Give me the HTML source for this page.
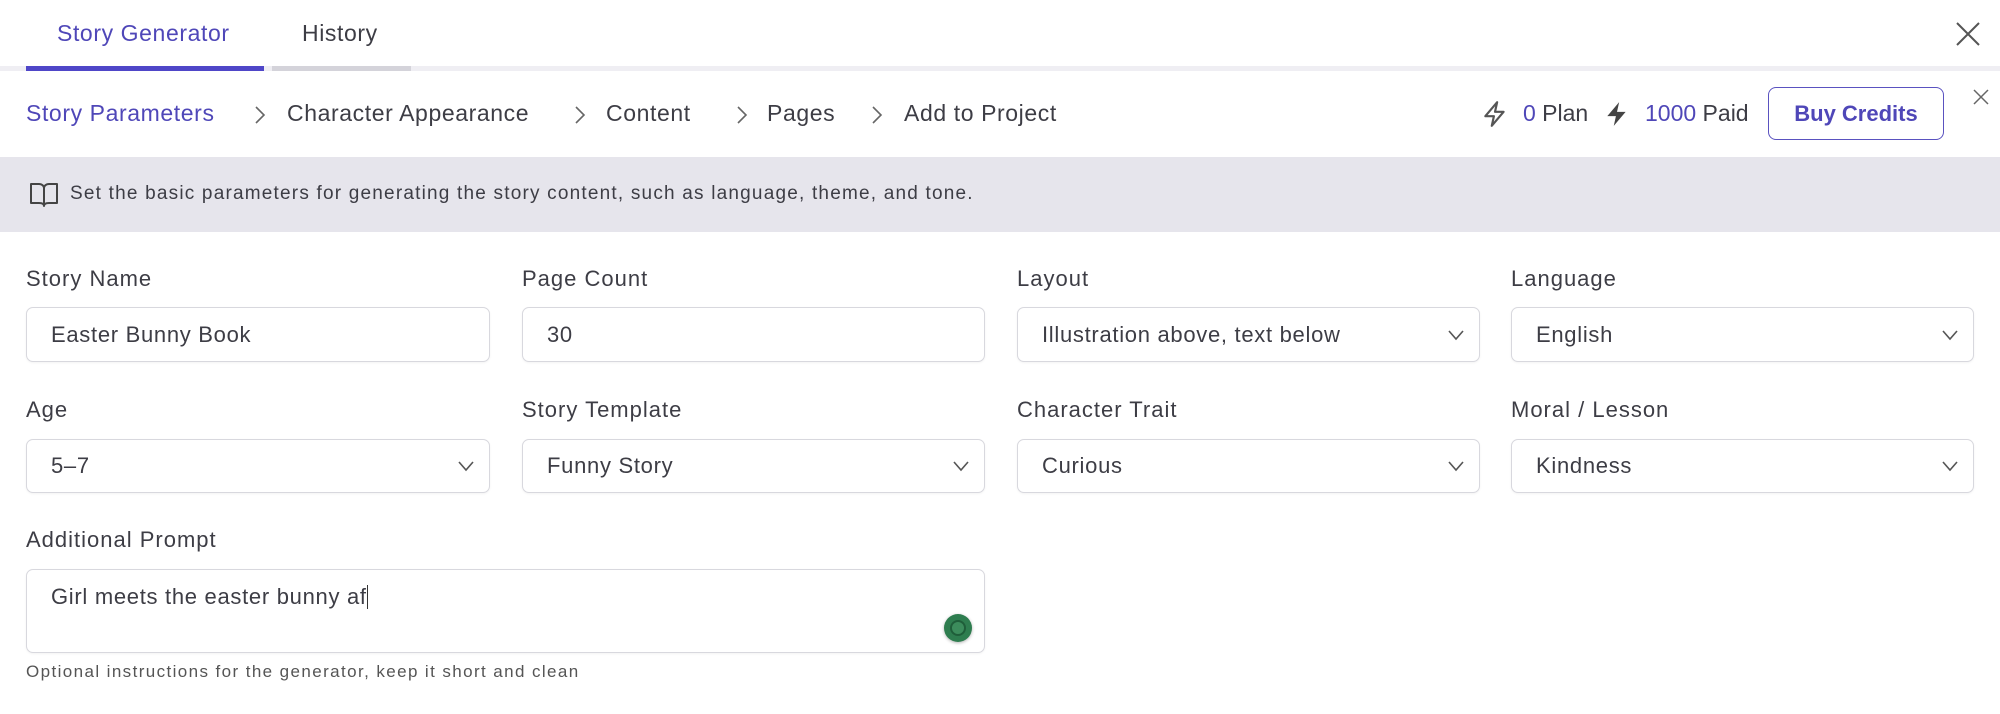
<!DOCTYPE html>
<html><head><meta charset="utf-8"><style>
*{box-sizing:border-box;margin:0;padding:0}
body{width:2000px;height:714px;background:#fff;font-family:"Liberation Sans",sans-serif;color:#3d3d45;position:relative;overflow:hidden}
.a{position:absolute;white-space:nowrap}
.tab{font-size:23px;top:20px;letter-spacing:.6px}
.bc{font-size:23px;top:100px;letter-spacing:.6px}
.chev{position:absolute;top:104px;width:20px;height:22px}
.lbl{font-size:22px;letter-spacing:1px}
.inp{position:absolute;border:1.5px solid #d8d8de;border-radius:7px;background:#fff;font-size:22px;letter-spacing:.7px;padding-left:24px;display:flex;align-items:center;box-shadow:0 1px 2px rgba(0,0,0,.05)}
.dd{position:absolute;right:14px;top:50%;margin-top:-8px}
</style></head><body>
<div class="a tab" style="left:57px;color:#4f47b8">Story Generator</div>
<div class="a tab" style="left:302px">History</div>
<div class="a" style="left:0;top:66px;width:2000px;height:5px;background:#efeef3"></div>
<div class="a" style="left:26px;top:66px;width:238px;height:5px;background:#4f46c8"></div>
<div class="a" style="left:272px;top:66px;width:139px;height:5px;background:#d4d3da"></div>
<svg class="a" style="left:1956px;top:22px" width="24" height="24"><path d="M1 1L23 23M23 1L1 23" stroke="#555" stroke-width="2"/></svg>

<div class="a bc" style="left:26px;color:#4f47b8">Story Parameters</div>
<svg class="chev" style="left:250px" viewBox="0 0 20 22"><path d="M6 3l8 8-8 8" fill="none" stroke="#666" stroke-width="1.6"/></svg>
<div class="a bc" style="left:287px">Character Appearance</div>
<svg class="chev" style="left:570px" viewBox="0 0 20 22"><path d="M6 3l8 8-8 8" fill="none" stroke="#666" stroke-width="1.6"/></svg>
<div class="a bc" style="left:606px">Content</div>
<svg class="chev" style="left:732px" viewBox="0 0 20 22"><path d="M6 3l8 8-8 8" fill="none" stroke="#666" stroke-width="1.6"/></svg>
<div class="a bc" style="left:767px">Pages</div>
<svg class="chev" style="left:867px" viewBox="0 0 20 22"><path d="M6 3l8 8-8 8" fill="none" stroke="#666" stroke-width="1.6"/></svg>
<div class="a bc" style="left:904px">Add to Project</div>

<svg class="a" style="left:1482px;top:100px" width="26" height="28" viewBox="0 0 24 26"><path d="M14 2L3 15h8l-2 9 11-13h-8z" fill="none" stroke="#555" stroke-width="2" stroke-linejoin="round"/></svg>
<div class="a bc" style="left:1523px;letter-spacing:0"><span style="color:#4f47b8">0</span> Plan</div>
<svg class="a" style="left:1604px;top:100px" width="26" height="28" viewBox="0 0 24 26"><path d="M14 2L3 15h8l-2 9 11-13h-8z" fill="#444"/></svg>
<div class="a bc" style="left:1645px;letter-spacing:0"><span style="color:#4f47b8">1000</span> Paid</div>
<div class="a" style="left:1768px;top:87px;width:176px;height:53px;border:1.5px solid #5a52c0;border-radius:8px;color:#4f47b8;font-size:22px;font-weight:bold;display:flex;align-items:center;justify-content:center">Buy Credits</div>
<svg class="a" style="left:1973px;top:89px" width="16" height="16"><path d="M1 1L15 15M15 1L1 15" stroke="#666" stroke-width="1.5"/></svg>

<div class="a" style="left:0;top:157px;width:2000px;height:75px;background:#e6e5ec"></div>
<svg class="a" style="left:29px;top:181px" width="30" height="28" viewBox="0 0 30 28"><path d="M2 3h8c3 0 5 2 5 4v18c0-2-2-3-5-3H2zM28 3h-8c-3 0-5 2-5 4v18c0-2 2-3 5-3h8z" fill="none" stroke="#444" stroke-width="2" stroke-linejoin="round"/></svg>
<div class="a" style="left:70px;top:183px;font-size:19px;letter-spacing:1.2px">Set the basic parameters for generating the story content, such as language, theme, and tone.</div>

<div class="a lbl" style="left:26px;top:266px">Story Name</div>
<div class="a lbl" style="left:522px;top:266px">Page Count</div>
<div class="a lbl" style="left:1017px;top:266px">Layout</div>
<div class="a lbl" style="left:1511px;top:266px">Language</div>
<div class="inp" style="left:26px;top:307px;width:464px;height:55px">Easter Bunny Book</div>
<div class="inp" style="left:522px;top:307px;width:463px;height:55px">30</div>
<div class="inp" style="left:1017px;top:307px;width:463px;height:55px">Illustration above, text below<svg class="dd" width="18" height="16"><path d="M2 4l7 8 7-8" fill="none" stroke="#555" stroke-width="1.6"/></svg></div>
<div class="inp" style="left:1511px;top:307px;width:463px;height:55px">English<svg class="dd" width="18" height="16"><path d="M2 4l7 8 7-8" fill="none" stroke="#555" stroke-width="1.6"/></svg></div>

<div class="a lbl" style="left:26px;top:397px">Age</div>
<div class="a lbl" style="left:522px;top:397px">Story Template</div>
<div class="a lbl" style="left:1017px;top:397px">Character Trait</div>
<div class="a lbl" style="left:1511px;top:397px">Moral / Lesson</div>
<div class="inp" style="left:26px;top:439px;width:464px;height:54px">5–7<svg class="dd" width="18" height="16"><path d="M2 4l7 8 7-8" fill="none" stroke="#555" stroke-width="1.6"/></svg></div>
<div class="inp" style="left:522px;top:439px;width:463px;height:54px">Funny Story<svg class="dd" width="18" height="16"><path d="M2 4l7 8 7-8" fill="none" stroke="#555" stroke-width="1.6"/></svg></div>
<div class="inp" style="left:1017px;top:439px;width:463px;height:54px">Curious<svg class="dd" width="18" height="16"><path d="M2 4l7 8 7-8" fill="none" stroke="#555" stroke-width="1.6"/></svg></div>
<div class="inp" style="left:1511px;top:439px;width:463px;height:54px">Kindness<svg class="dd" width="18" height="16"><path d="M2 4l7 8 7-8" fill="none" stroke="#555" stroke-width="1.6"/></svg></div>

<div class="a lbl" style="left:26px;top:527px">Additional Prompt</div>
<div class="inp" style="left:26px;top:569px;width:959px;height:84px;align-items:flex-start;padding-top:14px">Girl meets the easter bunny af<span style="display:inline-block;width:1.5px;height:24px;background:#333;margin-top:1px"></span></div>
<div class="a" style="left:944px;top:614px;width:28px;height:28px;border-radius:50%;background:#2e7d4f;box-shadow:0 1px 3px rgba(0,0,0,.3)"><div style="position:absolute;left:6px;top:6px;width:16px;height:16px;border-radius:50%;background:#3c8c5c;border:2px solid #1f5e3a"></div></div>
<div class="a" style="left:26px;top:662px;font-size:17px;letter-spacing:1.4px;color:#555">Optional instructions for the generator, keep it short and clean</div>
</body></html>
